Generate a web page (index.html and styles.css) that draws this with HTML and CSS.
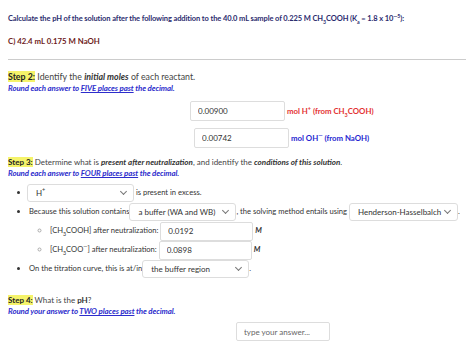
FILE: index.html
```html
<!DOCTYPE html>
<html lang="en">

<head>
  <meta charset="UTF-8">
  <title>pH Calculation</title>
  <link rel="stylesheet" href="styles.css">
</head>

<body>
  <div class="question">
    <p class="prompt">Calculate the pH of the solution after the following addition to the 40.0 mL sample of 0.225 M CH<sub>3</sub>COOH (K<sub>a</sub> = 1.8 x 10<sup>&mdash;5</sup>):</p>
    <p class="part">C) 42.4 mL 0.175 M NaOH</p>
  </div>
  <hr>

  <div class="step">
    <p class="step-title first"><span class="tag">Step 2:</span> Identify the <b><i>initial moles</i></b> of each reactant.</p>
    <p class="round">Round each answer to <u>FIVE places past</u> the decimal.</p>
    <div class="moles">
      <div class="mole-row">
        <input class="box" type="text" value="0.00900">
        <span class="lbl-red">mol H<sup>+</sup> (from CH<sub>3</sub>COOH)</span>
      </div>
      <div class="mole-row second">
        <input class="box" type="text" value="0.00742">
        <span class="lbl-blue">mol OH<sup>&mdash;</sup> (from NaOH)</span>
      </div>
    </div>
  </div>

  <div class="step">
    <p class="step-title"><span class="tag">Step 3:</span> Determine what is <b><i>present after neutralization</i></b>, and identify the <b><i>conditions of this solution</i></b>.</p>
    <p class="round">Round each answer to <u>FOUR places past</u> the decimal.</p>
    <ul class="list">
      <li>
        <span class="select"><span>H<sup>+</sup></span><span class="chev"></span></span> is present in excess.
      </li>
      <li>
        Because this solution contains <span class="select"><span>a buffer (WA and WB)</span><span class="chev"></span></span>, the solving method entails using <span class="select hh"><span>Henderson-Hasselbalch</span><span class="chev"></span></span>.
        <ul class="sub">
          <li>[CH<sub>3</sub>COOH] after neutralization: <input class="box small" type="text" value="0.0192"> <i class="unit">M</i></li>
          <li>[CH<sub>3</sub>COO<sup>&mdash;</sup>] after neutralization: <input class="box small" type="text" value="0.0898"> <i class="unit">M</i></li>
        </ul>
      </li>
      <li>
        On the titration curve, this is at/in <span class="select"><span>the buffer region</span><span class="chev"></span></span>.
      </li>
    </ul>
  </div>

  <div class="step last">
    <p class="step-title"><span class="tag">Step 4:</span> What is the <b>pH</b>?</p>
    <p class="round">Round your answer to <u>TWO places past</u> the decimal.</p>
    <div class="answer">
      <input class="box" type="text" placeholder="type your answer...">
    </div>
  </div>
</body>

</html>
```

FILE: styles.css
```css
body {
  font-family: 'Lato', 'Liberation Sans', sans-serif;
  margin: 0;
  padding: 13px 8px 0 8px;
  background: #fff;
  color: #444;
  font-size: 8px;
}

p {
  margin: 0;
}

sub,
sup {
  font-size: 0.7em;
  line-height: 0;
}

.prompt {
  color: #2b2b6e;
  font-weight: 700;
  font-size: 7.5px;
  line-height: 12px;
  letter-spacing: -0.1px;
  white-space: nowrap;
}

.part {
  color: #6e1b1b;
  font-weight: 700;
  font-size: 7.8px;
  line-height: 12px;
  margin-top: 10px;
}

hr {
  border: none;
  border-top: 1px solid #ccc;
  margin: 12px 0 11px 0;
}

.step-title {
  font-size: 8px;
  line-height: 12px;
  color: #444;
  white-space: nowrap;
}

.step-title.first {
  font-size: 8.8px;
}

.step-title b {
  color: #333;
}

.tag {
  background: #f5f36a;
  color: #222;
  font-weight: 700;
}

.round {
  color: #2d2dcc;
  font-weight: 700;
  font-style: italic;
  font-size: 7.9px;
  line-height: 10px;
  letter-spacing: -0.1px;
}

.box {
  font-family: inherit;
  font-size: 8px;
  color: #333;
  border: 1px solid #ddd;
  border-radius: 2px;
  padding: 0 7px;
  height: 20px;
  box-sizing: border-box;
  width: 95px;
  outline: none;
  margin: 0;
}

.box::placeholder {
  color: #666;
}

.moles {
  display: flex;
  flex-direction: column;
  gap: 7px;
  margin: 8px 0 8px 0;
}

.mole-row {
  display: flex;
  align-items: center;
  gap: 2px;
  padding-left: 182px;
}

.mole-row.second {
  padding-left: 186px;
}

.lbl-red {
  color: #e33030;
  font-weight: 700;
  font-size: 7.8px;
}

.lbl-blue {
  color: #2525d0;
  font-weight: 700;
  font-size: 7.8px;
}

.list {
  margin: 5px 0 0 0;
  padding-left: 21px;
  font-size: 7.6px;
  color: #333;
  white-space: nowrap;
}

.list li {
  line-height: 19px;
  height: 19px;
}

.list > li:nth-child(2) {
  height: auto;
}

.select {
  display: inline-flex;
  align-items: center;
  justify-content: space-between;
  border: 1px solid #ddd;
  border-radius: 3px;
  height: 18px;
  box-sizing: border-box;
  padding: 0 7px 0 8px;
  width: 107px;
  vertical-align: middle;
  color: #333;
  line-height: 1;
  font-size: 8px;
  margin-left: -2px;
}

.select.hh {
  width: 109px;
  margin-left: 0;
}

.chev {
  width: 4px;
  height: 4px;
  border-right: 1px solid #777;
  border-bottom: 1px solid #777;
  transform: rotate(45deg);
  margin-top: -3px;
}

.sub {
  list-style: circle;
  padding-left: 21px;
  margin: 0;
}

.sub li::marker {
  color: #aaa;
}

.box.small {
  width: 93px;
  height: 19px;
  vertical-align: middle;
}

.unit {
  font-weight: 700;
  font-style: italic;
  font-size: 7.5px;
}

.step.last {
  margin-top: 16px;
}

.answer {
  padding-left: 228px;
  margin-top: 6px;
}

.answer .box {
  width: 94px;
  height: 19px;
}
```
